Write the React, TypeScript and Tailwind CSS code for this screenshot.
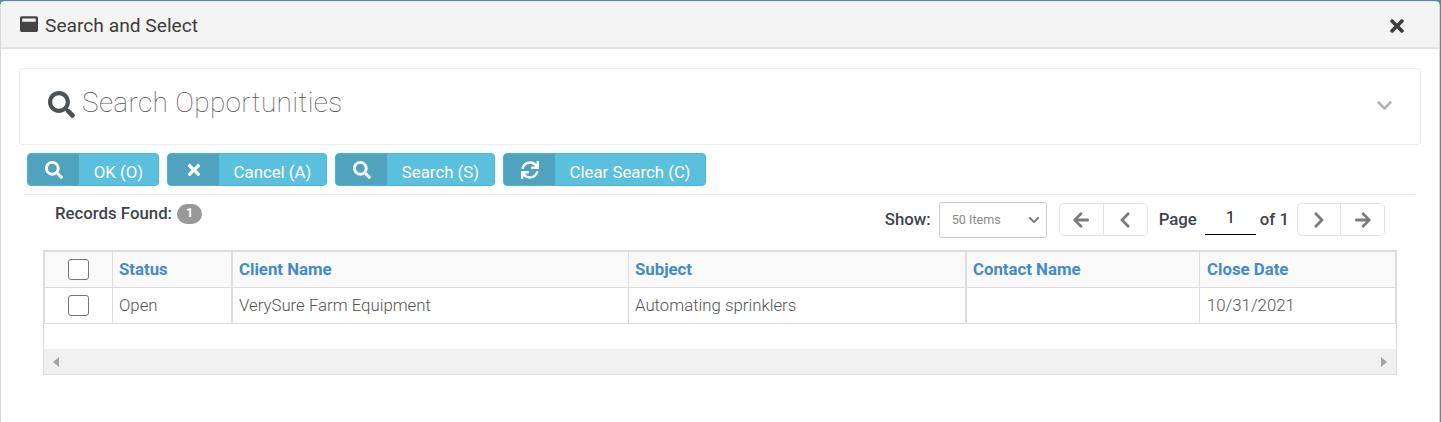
import {
  FaArrowLeft,
  FaArrowRight,
  FaChevronDown,
  FaChevronLeft,
  FaChevronRight,
  FaSearch,
  FaSync,
  FaTimes,
  FaWindowMaximize,
} from "react-icons/fa";
import type { ReactNode } from "react";

function ActionButton({ icon, label, textWidth }: { icon: ReactNode; label: string; textWidth: string }) {
  return (
    <button type="button" className="flex h-[33px] overflow-hidden rounded-[4px] border border-[#46b8da] bg-[#5bc0de] text-[16.8px] leading-none text-white">
      <span className="flex h-full w-[51px] items-center justify-center bg-[#4fa3bf] pt-[1px] text-[18px]">{icon}</span>
      <span className={`flex h-full items-center justify-center pt-[5px] ${textWidth}`}>{label}</span>
    </button>
  );
}

function PagerGroup({ first, second, firstWidth, secondWidth }: { first: ReactNode; second: ReactNode; firstWidth: string; secondWidth: string }) {
  return (
    <div className="mt-[1px] flex h-[33px] items-stretch rounded-[5px] border border-[#e3e3e3] text-[18px] text-[#7b7b7b]">
      <span className={`flex items-center justify-center border-r border-[#e3e3e3] ${firstWidth}`}>{first}</span>
      <span className={`flex items-center justify-center ${secondWidth}`}>{second}</span>
    </div>
  );
}

function Check() {
  return <span className="block h-[21px] w-[21px] rounded-[3px] border border-[#767676] bg-white" />;
}

const gridCols = "grid grid-cols-[68px_120px_396px_338px_233px_1fr]";

export default function App() {
  return (
    <div className="h-[422px] w-[1441px] overflow-hidden bg-[#5b8aa0] pt-[1px] font-['Roboto',sans-serif]">
      <div className="ml-0 mr-[1px] h-[421px] rounded-t-[5px] border-x border-[#d9d9d9] border-t border-t-[#e5e5e5] bg-white">
        <header className="flex h-[47px] items-center justify-between border-b-2 border-[#e3e3e3] bg-[#f4f4f4] pl-[19px] pr-[32px]">
          <div className="flex items-center gap-[7px] text-[19.2px] text-[#3c3c3c]">
            <FaWindowMaximize className="text-[18px] text-[#444]" />
            <span className="pt-[3px]">Search and Select</span>
          </div>
          <FaTimes className="mt-[3px] text-[20px] text-[#3d3d3d]" />
        </header>

        <div className="px-[18px] pt-[19px]">
          <section className="flex h-[77px] items-center justify-between rounded-[4px] border border-[#ececec] pl-[28px] pr-[27px]">
            <div className="flex items-center gap-[7px]">
              <FaSearch className="mt-[-5px] text-[27px] text-[#4d5257]" />
              <h2 className="pb-[8px] text-[28px] font-thin tracking-[0.35px] text-[#555]">Search Opportunities</h2>
            </div>
            <FaChevronDown className="mt-[-3px] text-[17px] text-[#b4b4b4]" />
          </section>
        </div>

        <div className="ml-[26px] mt-[8px] flex gap-[8px]">
          <ActionButton icon={<FaSearch />} label="OK (O)" textWidth="w-[79px]" />
          <ActionButton icon={<FaTimes />} label="Cancel (A)" textWidth="w-[107px]" />
          <ActionButton icon={<FaSearch />} label="Search (S)" textWidth="w-[107px]" />
          <ActionButton icon={<FaSync />} label="Clear Search (C)" textWidth="w-[150px]" />
        </div>

        <div className="ml-[24px] mr-[24px] mt-[8px] border-t border-[#ececec]" />

        <div className="ml-[54px] mr-[54px] flex items-start justify-between">
          <div className="mt-[6px] flex items-center gap-[5px] text-[16.8px] font-medium text-[#3f444a]">
            <span>Records Found:</span>
            <span className="flex h-[20px] w-[25px] items-center justify-center rounded-full bg-[#999] text-[12.6px] font-bold text-white">1</span>
          </div>
          <div className="mt-[7px] flex items-start text-[16.8px] font-medium text-[#3f444a]">
            <span className="mt-[5px]">Show:</span>
            <div className="ml-[8px] flex h-[36px] w-[108px] items-center justify-between rounded-[3px] border border-[#cccccc] pl-[12px] pr-[6px] text-[12.6px] font-normal text-[#8a8a8a]">
              <span>50 Items</span>
              <FaChevronDown className="text-[12px] text-[#777]" />
            </div>
            <div className="ml-[12px]">
              <PagerGroup first={<FaArrowLeft />} second={<FaChevronLeft />} firstWidth="w-[44px]" secondWidth="w-[43px]" />
            </div>
            <span className="ml-[11px] mt-[5px]">Page</span>
            <span className="ml-[8px] h-[33px] w-[51px] border-b border-black pt-[3px] text-center text-[16.8px] font-normal text-[#222]">1</span>
            <span className="ml-[4px] mt-[5px]">of 1</span>
            <div className="ml-[8px]">
              <PagerGroup first={<FaChevronRight />} second={<FaArrowRight />} firstWidth="w-[43px]" secondWidth="w-[43px]" />
            </div>
          </div>
        </div>

        <div className="ml-[42px] mt-[12px] w-[1354px] border border-[#dddddd]">
          <div className={`${gridCols} h-[37px] border-x border-b border-t border-[#dddddd] bg-[#f9f9f9] text-[16.8px] font-bold text-[#428bca]`}>
            <div className="flex items-center justify-center border-r border-[#dddddd] pr-[1px]"><Check /></div>
            <div className="flex items-center border-r-2 border-[#dddddd] pl-[6px]">Status</div>
            <div className="flex items-center border-r border-[#dddddd] pl-[6px]">Client Name</div>
            <div className="flex items-center border-r-2 border-[#dddddd] pl-[6px]">Subject</div>
            <div className="flex items-center border-r border-[#dddddd] pl-[6px]">Contact Name</div>
            <div className="flex items-center pl-[7px]">Close Date</div>
          </div>
          <div className={`${gridCols} h-[36px] border-x border-b border-[#dddddd] text-[16.8px] font-light text-[#555]`}>
            <div className="flex items-center justify-center border-r border-[#dddddd] pr-[1px]"><Check /></div>
            <div className="flex items-center border-r-2 border-[#dddddd] pl-[6px]">Open</div>
            <div className="flex items-center border-r border-[#dddddd] pl-[6px]">VerySure Farm Equipment</div>
            <div className="flex items-center border-r-2 border-[#dddddd] pl-[6px]">Automating sprinklers</div>
            <div className="flex items-center border-r border-[#dddddd]" />
            <div className="flex items-center pl-[7px]">10/31/2021</div>
          </div>
          <div className="h-[25px]" />
          <div className="flex h-[25px] items-center justify-between bg-[#f0f0f0] px-[9px]">
            <span className="h-0 w-0 border-y-[5px] border-r-[6px] border-y-transparent border-r-[#a3a3a3]" />
            <span className="h-0 w-0 border-y-[5px] border-l-[6px] border-y-transparent border-l-[#a3a3a3]" />
          </div>
        </div>
      </div>
    </div>
  );
}
